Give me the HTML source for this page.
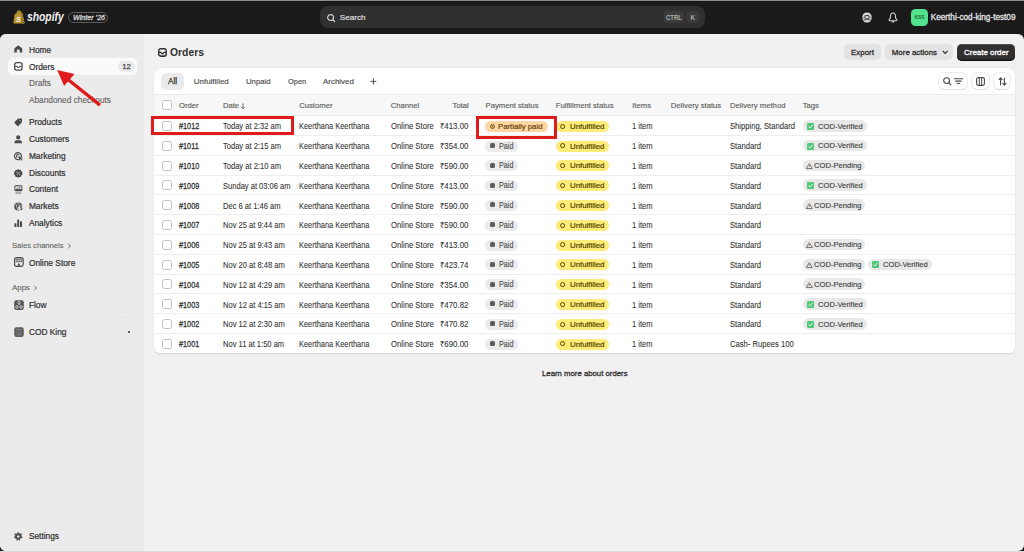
<!DOCTYPE html>
<html><head><meta charset="utf-8"><title>Orders</title>
<style>
html,body{margin:0;padding:0;}
body{width:1024px;height:552px;overflow:hidden;position:relative;background:#1a1a1a;font-family:"Liberation Sans",sans-serif;}
.t{position:absolute;white-space:nowrap;line-height:1;}
.r{position:absolute;}
svg.r{overflow:visible;}
</style></head><body>
<div class="r" style="left:0.00px;top:0.00px;width:1024.00px;height:1.00px;background:#8e8e8e"></div>
<div class="r" style="left:0.00px;top:1.00px;width:1024.00px;height:1.00px;background:#141414"></div>
<svg class="r" style="left:12.50px;top:10.00px" width="12" height="14" viewBox="0 0 12 14"><path d="M3.2 4.6 C3.2 1.6 4.6 0.3 6 0.3 C7.5 0.3 8.6 1.6 8.7 3.8 Z" fill="#a8882a"/><path d="M1.7 4.5 Q1.8 3.9 2.5 3.8 L9.3 3.1 L11.5 12.7 Q11.6 13.6 10.7 13.6 L1.1 13.6 Q0.3 13.6 0.4 12.8 Z" fill="#b9952d"/><path d="M9.3 3.1 L11.5 12.7 Q11.6 13.6 10.7 13.6 L8.5 13.6 L8.2 3.2 Z" fill="#96782a"/><text x="3.0" y="11.5" font-family="Liberation Sans" font-weight="bold" font-style="italic" font-size="7.4" fill="#f2f2f2">S</text></svg>
<div class="t" style="left:27.00px;transform-origin:left;top:10.99px;font-size:12.3px;font-weight:700;color:#f1f1f1;transform:scaleX(0.84);font-style:italic;">shopify</div>
<div class="r" style="left:67.80px;top:11.70px;width:39.80px;height:11.80px;border:0.9px solid #5e5e5e;border-radius:6px;box-sizing:border-box"></div>
<div class="t" style="left:72.60px;transform-origin:left;top:14.47px;font-size:7.0px;font-weight:400;color:#d4d4d4;transform:scaleX(1.02);-webkit-text-stroke:0.3px #d4d4d4;font-style:italic;">Winter ’26</div>
<div class="r" style="left:319.80px;top:6.00px;width:385.00px;height:22.00px;background:#303030;border-radius:8px"></div>
<svg class="r" style="left:327.30px;top:14.00px" width="9" height="8" viewBox="0 0 9 8"><circle cx="3.6" cy="3.5" r="2.95" fill="none" stroke="#d4d4d4" stroke-width="1.15"/><path d="M5.8 5.7 L7.6 7.5" stroke="#d4d4d4" stroke-width="1.2" stroke-linecap="round"/></svg>
<div class="t" style="left:339.80px;transform-origin:left;top:13.94px;font-size:8.1px;font-weight:400;color:#e3e3e3;transform:scaleX(1.0);-webkit-text-stroke:0.15px #e3e3e3;">Search</div>
<div class="r" style="left:663.80px;top:10.90px;width:20.70px;height:12.50px;background:#3b3b3b;border-radius:3.5px"></div>
<div class="t" style="left:574.10px;width:200px;text-align:center;transform-origin:center;top:14.57px;font-size:6.3px;font-weight:700;color:#b0b0b0;transform:scaleX(0.95);">CTRL</div>
<div class="r" style="left:686.90px;top:10.90px;width:12.10px;height:12.50px;background:#3b3b3b;border-radius:3.5px"></div>
<div class="t" style="left:592.90px;width:200px;text-align:center;transform-origin:center;top:14.57px;font-size:6.3px;font-weight:700;color:#b0b0b0;transform:scaleX(1.0);">K</div>
<svg class="r" style="left:861.50px;top:12.00px" width="10" height="11" viewBox="0 0 10 11"><rect x="0.4" y="0.4" width="9.2" height="10" rx="4.2" fill="#d8d8d8"/><path d="M2.2 4.3 Q5 2.6 7.8 4.3" stroke="#1a1a1a" stroke-width="0.95" fill="none"/><path d="M1 5.7 L3.4 5.7 M6.6 5.7 L9 5.7 M1.4 7.9 L3.4 7.9 M6.6 7.9 L8.6 7.9" stroke="#1a1a1a" stroke-width="0.55"/><path d="M2.6 5.9 L7.4 8.1 M7.4 5.9 L2.6 8.1" stroke="#1a1a1a" stroke-width="0.7"/></svg>
<svg class="r" style="left:888.10px;top:11.80px" width="10" height="11" viewBox="0 0 10 11"><path d="M5 1 C3.1 1 2.5 2.8 2.5 4.4 L2.4 6 C2.4 6.7 1 7.2 1 8.1 C1 8.5 1.3 8.7 1.8 8.7 L8.2 8.7 C8.7 8.7 9 8.5 9 8.1 C9 7.2 7.6 6.7 7.6 6 L7.5 4.4 C7.5 2.8 6.9 1 5 1 Z" fill="none" stroke="#d6d6d6" stroke-width="1.05" stroke-linejoin="round"/><path d="M3.9 9.3 Q5 10.6 6.1 9.3" stroke="#d6d6d6" stroke-width="1.05" fill="none"/></svg>
<div class="r" style="left:911.10px;top:8.90px;width:16.90px;height:17.00px;background:#52e28b;border-radius:4.5px"></div>
<div class="t" style="left:819.55px;width:200px;text-align:center;transform-origin:center;top:15.54px;font-size:4.8px;font-weight:700;color:#1b6b3a;transform:scaleX(1.0);">KSS</div>
<div class="t" style="left:930.80px;transform-origin:left;top:13.56px;font-size:8.2px;font-weight:400;color:#e3e3e3;transform:scaleX(1.0);-webkit-text-stroke:0.3px #e3e3e3;">Keerthi-cod-king-test09</div>
<div class="r" style="left:0;top:34px;width:1024px;height:517px;border-radius:6px;overflow:hidden;background:#f1f1f1"><div style="position:absolute;left:0;top:0;width:144px;height:517px;background:#ebebeb"></div></div>
<div class="r" style="left:0.00px;top:551.00px;width:1024.00px;height:1.00px;background:#d9dbd8"></div>
<div class="r" style="left:8.00px;top:58.10px;width:128.80px;height:16.70px;background:#fafafa;border-radius:5px"></div>
<div class="r" style="left:118.00px;top:60.90px;width:17.00px;height:11.40px;background:#ebebeb;border-radius:5px"></div>
<div class="t" style="left:26.40px;width:200px;text-align:center;transform-origin:center;top:63.07px;font-size:7.6px;font-weight:400;color:#4a4a4a;transform:scaleX(1.0);-webkit-text-stroke:0.25px #4a4a4a;">12</div>
<svg class="r" style="left:14.00px;top:45.20px" width="9" height="8.5" viewBox="0 0 9 8.5"><path d="M4.25 0.4 Q3.9 0.4 3.6 0.7 L0.8 3.1 Q0.3 3.5 0.3 4.2 L0.3 6.9 Q0.3 7.6 1 7.6 L2.8 7.6 L2.8 5.4 Q2.8 4.6 3.6 4.6 L4.9 4.6 Q5.7 4.6 5.7 5.4 L5.7 7.6 L7.5 7.6 Q8.2 7.6 8.2 6.9 L8.2 4.2 Q8.2 3.5 7.7 3.1 L4.9 0.7 Q4.6 0.4 4.25 0.4 Z" fill="#4a4a4a"/></svg>
<div class="t" style="left:28.90px;transform-origin:left;top:46.03px;font-size:8.35px;font-weight:400;color:#303030;transform:scaleX(1.0);-webkit-text-stroke:0.2px #303030;">Home</div>
<svg class="r" style="left:14.00px;top:62.20px" width="9" height="9" viewBox="0 0 9 9"><rect x="0.65" y="0.65" width="7.4" height="7.4" rx="2" fill="none" stroke="#4a4a4a" stroke-width="1.3"/><path d="M0.9 4.3 L2.7 4.3 Q3.1 4.3 3.3 4.7 L3.5 5.1 Q3.7 5.5 4.1 5.5 L4.6 5.5 Q5 5.5 5.2 5.1 L5.4 4.7 Q5.6 4.3 6 4.3 L7.8 4.3" fill="none" stroke="#4a4a4a" stroke-width="1.1"/></svg>
<div class="t" style="left:28.90px;transform-origin:left;top:62.83px;font-size:8.35px;font-weight:400;color:#303030;transform:scaleX(1.0);-webkit-text-stroke:0.2px #303030;">Orders</div>
<div class="t" style="left:28.90px;transform-origin:left;top:79.37px;font-size:8.3px;font-weight:400;color:#616161;transform:scaleX(1.0);-webkit-text-stroke:0.1px #616161;">Drafts</div>
<div class="t" style="left:28.90px;transform-origin:left;top:96.47px;font-size:8.3px;font-weight:400;color:#616161;transform:scaleX(1.0);-webkit-text-stroke:0.1px #616161;">Abandoned checkouts</div>
<svg class="r" style="left:14.00px;top:118.00px" width="9" height="9" viewBox="0 0 9 9"><path d="M4.6 0.5 L7.2 0.5 Q8 0.5 8 1.3 L8 3.9 Q8 4.3 7.7 4.6 L4.4 7.9 Q3.9 8.4 3.4 7.9 L0.6 5.1 Q0.1 4.6 0.6 4.1 L3.9 0.8 Q4.2 0.5 4.6 0.5 Z" fill="#4a4a4a"/><circle cx="6" cy="2.5" r="0.8" fill="#9a9a9a"/></svg>
<div class="t" style="left:28.90px;transform-origin:left;top:118.03px;font-size:8.35px;font-weight:400;color:#303030;transform:scaleX(1.0);-webkit-text-stroke:0.2px #303030;">Products</div>
<svg class="r" style="left:14.00px;top:135.00px" width="9" height="9" viewBox="0 0 9 9"><circle cx="4.2" cy="2.4" r="2.1" fill="#4a4a4a"/><path d="M0.4 8.3 L0.4 7.4 Q0.4 5.3 2.6 5.3 L5.8 5.3 Q8 5.3 8 7.4 L8 8.3 Z" fill="#4a4a4a"/></svg>
<div class="t" style="left:28.90px;transform-origin:left;top:135.03px;font-size:8.35px;font-weight:400;color:#303030;transform:scaleX(1.0);-webkit-text-stroke:0.2px #303030;">Customers</div>
<svg class="r" style="left:14.00px;top:151.70px" width="9" height="9" viewBox="0 0 9 9"><path d="M7.4 4.8 A3.5 3.5 0 1 0 4.8 7.5" fill="none" stroke="#4a4a4a" stroke-width="1.15"/><path d="M5.5 3.4 A1.6 1.6 0 1 0 3.5 5.5" fill="none" stroke="#4a4a4a" stroke-width="1.05"/><path d="M4.4 4.4 L8.6 5.6 L7 6.4 L8.6 8 L8 8.6 L6.4 7 L5.6 8.6 Z" fill="#4a4a4a" stroke="#4a4a4a" stroke-width="0.3" stroke-linejoin="round"/></svg>
<div class="t" style="left:28.90px;transform-origin:left;top:151.73px;font-size:8.35px;font-weight:400;color:#303030;transform:scaleX(1.0);-webkit-text-stroke:0.2px #303030;">Marketing</div>
<svg class="r" style="left:14.00px;top:168.50px" width="9" height="9" viewBox="0 0 9 9"><path d="M4.2 0 L5.3 0.9 L6.8 0.8 L7.2 2.2 L8.5 3 L8 4.4 L8.5 5.8 L7.2 6.6 L6.8 8 L5.3 7.9 L4.2 8.8 L3.1 7.9 L1.6 8 L1.2 6.6 L-0.1 5.8 L0.4 4.4 L-0.1 3 L1.2 2.2 L1.6 0.8 L3.1 0.9 Z" fill="#4a4a4a"/><path d="M2.8 6 L5.6 2.8" stroke="#ebebeb" stroke-width="0.7"/><circle cx="3" cy="3.1" r="0.55" fill="#ebebeb"/><circle cx="5.4" cy="5.7" r="0.55" fill="#ebebeb"/></svg>
<div class="t" style="left:28.90px;transform-origin:left;top:168.53px;font-size:8.35px;font-weight:400;color:#303030;transform:scaleX(1.0);-webkit-text-stroke:0.2px #303030;">Discounts</div>
<svg class="r" style="left:14.00px;top:185.10px" width="9" height="9" viewBox="0 0 9 9"><rect x="0.4" y="0.3" width="8" height="6" rx="1.4" fill="#4a4a4a"/><path d="M1.3 5.3 L3.3 3.2 L5 4.4 L6.2 3.6 L7.5 4.8 L7.5 1.8 Q7.5 1.2 6.9 1.2 L1.9 1.2 Q1.3 1.2 1.3 1.8 Z" fill="#d8d8d8"/><circle cx="5.6" cy="2.3" r="0.6" fill="#4a4a4a"/><path d="M1.6 8 L7.2 8" stroke="#4a4a4a" stroke-width="0.8"/></svg>
<div class="t" style="left:28.90px;transform-origin:left;top:185.13px;font-size:8.35px;font-weight:400;color:#303030;transform:scaleX(1.0);-webkit-text-stroke:0.2px #303030;">Content</div>
<svg class="r" style="left:14.00px;top:202.00px" width="9" height="9" viewBox="0 0 9 9"><circle cx="4.2" cy="4.4" r="4" fill="#4a4a4a"/><path d="M1.2 2.2 L2.8 3 L2.4 4.6 L3.6 6.2 L3.4 8 M3.4 0.6 L4.4 2.2 L5.6 2.4" fill="none" stroke="#ebebeb" stroke-width="0.75"/><circle cx="7" cy="5.8" r="2.9" fill="#ebebeb"/><path d="M8.2 4.4 Q7.9 3.9 7.1 3.9 Q6.1 3.9 6.1 4.7 Q6.1 5.4 7.1 5.6 Q8.2 5.8 8.2 6.7 Q8.2 7.6 7.1 7.6 Q6.3 7.6 5.9 7" fill="none" stroke="#4a4a4a" stroke-width="0.9"/><path d="M7.1 3.2 L7.1 8.3" stroke="#4a4a4a" stroke-width="0.6"/></svg>
<div class="t" style="left:28.90px;transform-origin:left;top:202.03px;font-size:8.35px;font-weight:400;color:#303030;transform:scaleX(1.0);-webkit-text-stroke:0.2px #303030;">Markets</div>
<svg class="r" style="left:14.00px;top:218.90px" width="9" height="9" viewBox="0 0 9 9"><rect x="0.4" y="4.2" width="2" height="3.8" rx="0.6" fill="#4a4a4a"/><rect x="3.2" y="0.4" width="2" height="7.6" rx="0.6" fill="#4a4a4a"/><rect x="6" y="2.2" width="2" height="5.8" rx="0.6" fill="#4a4a4a"/></svg>
<div class="t" style="left:28.90px;transform-origin:left;top:218.93px;font-size:8.35px;font-weight:400;color:#303030;transform:scaleX(1.0);-webkit-text-stroke:0.2px #303030;">Analytics</div>
<div class="t" style="left:12.00px;transform-origin:left;top:242.07px;font-size:7.6px;font-weight:400;color:#616161;transform:scaleX(1.0);-webkit-text-stroke:0.1px #616161;">Sales channels</div>
<svg class="r" style="left:67.40px;top:242.80px" width="5" height="6" viewBox="0 0 5 6"><path d="M1.2 0.8 L3.5 3 L1.2 5.2" fill="none" stroke="#616161" stroke-width="0.9"/></svg>
<svg class="r" style="left:13.50px;top:257.40px" width="10" height="10" viewBox="0 0 10 10"><rect x="0.6" y="0.6" width="8.6" height="8.8" rx="1.8" fill="none" stroke="#4a4a4a" stroke-width="1.2"/><path d="M2.2 2.2 L7.6 2.2 L7.6 4.8 L2.2 4.8 Z" fill="none" stroke="#4a4a4a" stroke-width="0.8"/><path d="M3.9 2.2 L3.9 4.8 M5.9 2.2 L5.9 4.8" stroke="#4a4a4a" stroke-width="0.6"/><path d="M3.2 8.4 L4.9 5.9 L6.6 8.4 Z" fill="#4a4a4a"/></svg>
<div class="t" style="left:28.90px;transform-origin:left;top:258.73px;font-size:8.35px;font-weight:400;color:#303030;transform:scaleX(1.0);-webkit-text-stroke:0.2px #303030;">Online Store</div>
<div class="t" style="left:12.00px;transform-origin:left;top:283.91px;font-size:7.9px;font-weight:400;color:#616161;transform:scaleX(1.0);-webkit-text-stroke:0.1px #616161;">Apps</div>
<svg class="r" style="left:33.40px;top:285.00px" width="5" height="6" viewBox="0 0 5 6"><path d="M1.2 0.8 L3.5 3 L1.2 5.2" fill="none" stroke="#616161" stroke-width="0.9"/></svg>
<svg class="r" style="left:13.50px;top:299.60px" width="10" height="10.2" viewBox="0 0 10 10.2"><rect x="0.2" y="0.2" width="9.6" height="9.8" rx="2.2" fill="#555555"/><circle cx="5" cy="2.7" r="1.25" fill="none" stroke="#e6e6e6" stroke-width="0.75"/><circle cx="2.9" cy="7.1" r="1.25" fill="none" stroke="#e6e6e6" stroke-width="0.75"/><circle cx="7.1" cy="7.1" r="1.25" fill="none" stroke="#e6e6e6" stroke-width="0.75"/><path d="M5 3.95 L5 4.9 M4.4 4.9 L3.2 5.85 M5.6 4.9 L6.8 5.85" stroke="#e6e6e6" stroke-width="0.6" fill="none"/></svg>
<div class="t" style="left:28.90px;transform-origin:left;top:301.13px;font-size:8.35px;font-weight:400;color:#303030;transform:scaleX(1.0);-webkit-text-stroke:0.2px #303030;">Flow</div>
<div class="r" style="left:12.00px;top:317.20px;width:113.50px;height:1.00px;background:#e4e4e4"></div>
<svg class="r" style="left:13.50px;top:327.00px" width="10" height="10.2" viewBox="0 0 10 10.2"><rect x="0.2" y="0.2" width="9.6" height="9.8" rx="2.2" fill="#5f5f5f"/><path d="M2 3 L4 2 L6 3.4 L8 2.4 M2.2 6 L4.4 4.6 L5.6 6.6 L7.8 5.4 M2.6 8.2 L5 7.2 L7.4 8.4" stroke="#8e8e8e" stroke-width="0.8" fill="none"/></svg>
<div class="t" style="left:28.90px;transform-origin:left;top:327.93px;font-size:8.35px;font-weight:400;color:#303030;transform:scaleX(1.0);-webkit-text-stroke:0.2px #303030;">COD King</div>
<div class="r" style="left:127.90px;top:330.90px;width:2.30px;height:2.30px;background:#303030;border-radius:50%"></div>
<svg class="r" style="left:13.90px;top:532.20px" width="9" height="9" viewBox="0 0 9 9"><path d="M4.2 0.2 L5.6 1.9 L7.8 1.8 L7 3.9 L8.3 5.7 L6.1 6.3 L5.4 8.5 L4.2 7.3 L3 8.5 L2.3 6.3 L0.1 5.7 L1.4 3.9 L0.6 1.8 L2.8 1.9 Z" fill="#4a4a4a" stroke="#4a4a4a" stroke-width="0.5" stroke-linejoin="round"/><circle cx="4.2" cy="4.5" r="1.2" fill="#ebebeb"/></svg>
<div class="t" style="left:28.90px;transform-origin:left;top:532.23px;font-size:8.35px;font-weight:400;color:#303030;transform:scaleX(1.0);-webkit-text-stroke:0.2px #303030;">Settings</div>
<svg class="r" style="left:158.00px;top:47.90px" width="9" height="9" viewBox="0 0 9 9"><rect x="0.7" y="0.7" width="7.5" height="7.5" rx="2" fill="none" stroke="#303030" stroke-width="1.4"/><path d="M0.9 4.4 L2.8 4.4 Q3.2 4.4 3.4 4.8 L3.6 5.2 Q3.8 5.6 4.2 5.6 L4.7 5.6 Q5.1 5.6 5.3 5.2 L5.5 4.8 Q5.7 4.4 6.1 4.4 L8 4.4" fill="none" stroke="#303030" stroke-width="1.2"/><path d="M1 7.2 L8 7.2" stroke="#303030" stroke-width="0.8" opacity="0.6"/></svg>
<div class="t" style="left:169.80px;transform-origin:left;top:46.76px;font-size:10.8px;font-weight:700;color:#303030;transform:scaleX(0.96);">Orders</div>
<div class="r" style="left:844.20px;top:43.90px;width:36.60px;height:16.60px;background:#e3e3e3;border-radius:5px"></div>
<div class="t" style="left:762.50px;width:200px;text-align:center;transform-origin:center;top:48.71px;font-size:7.9px;font-weight:400;color:#303030;transform:scaleX(1.0);-webkit-text-stroke:0.3px #303030;">Export</div>
<div class="r" style="left:884.80px;top:43.90px;width:68.30px;height:16.60px;background:#e3e3e3;border-radius:5px"></div>
<div class="t" style="left:891.80px;transform-origin:left;top:48.71px;font-size:7.9px;font-weight:400;color:#303030;transform:scaleX(1.0);-webkit-text-stroke:0.3px #303030;">More actions</div>
<svg class="r" style="left:941.60px;top:49.60px" width="7" height="5" viewBox="0 0 7 5"><path d="M0.8 1 L3.2 3.5 L5.6 1" fill="none" stroke="#303030" stroke-width="1.1"/></svg>
<div class="r" style="left:956.80px;top:43.50px;width:58.70px;height:17.50px;background:#303030;border-radius:5px;box-shadow:inset 0 -1.2px 0 #0f0f0f, inset 0 0.8px 0 #5a5a5a"></div>
<div class="t" style="left:886.30px;width:200px;text-align:center;transform-origin:center;top:48.67px;font-size:7.95px;font-weight:400;color:#ffffff;transform:scaleX(1.0);-webkit-text-stroke:0.3px #ffffff;">Create order</div>
<div class="r" style="left:154.00px;top:67.60px;width:861.00px;height:285.60px;background:#fff;border-radius:8px 8px 6px 6px;box-shadow:0 0 0 0.6px #e6e6e6, 0 1px 0 #d2d2d2, 0 2px 1px #e8e8e8"></div>
<div class="r" style="left:161.00px;top:73.30px;width:23.30px;height:16.50px;background:#ebebeb;border-radius:5px"></div>
<div class="t" style="left:72.60px;width:200px;text-align:center;transform-origin:center;top:78.26px;font-size:8.2px;font-weight:400;color:#303030;transform:scaleX(1.0);-webkit-text-stroke:0.25px #303030;">All</div>
<div class="t" style="left:193.70px;transform-origin:left;top:78.43px;font-size:8.0px;font-weight:400;color:#4d4d4d;transform:scaleX(1.0);-webkit-text-stroke:0.15px #4d4d4d;">Unfulfilled</div>
<div class="t" style="left:246.40px;transform-origin:left;top:78.43px;font-size:8.0px;font-weight:400;color:#4d4d4d;transform:scaleX(0.97);-webkit-text-stroke:0.15px #4d4d4d;">Unpaid</div>
<div class="t" style="left:288.10px;transform-origin:left;top:78.43px;font-size:8.0px;font-weight:400;color:#4d4d4d;transform:scaleX(0.93);-webkit-text-stroke:0.15px #4d4d4d;">Open</div>
<div class="t" style="left:323.30px;transform-origin:left;top:78.43px;font-size:8.0px;font-weight:400;color:#4d4d4d;transform:scaleX(0.99);-webkit-text-stroke:0.15px #4d4d4d;">Archived</div>
<svg class="r" style="left:369.80px;top:77.80px" width="7" height="7" viewBox="0 0 7 7"><path d="M3.4 0.4 L3.4 6.4 M0.4 3.4 L6.4 3.4" stroke="#4a4a4a" stroke-width="1"/></svg>
<div class="r" style="left:938.70px;top:72.90px;width:28.50px;height:16.50px;background:#fff;border-radius:5px;box-shadow:0 0 0 0.7px #e3e3e3, 0 1px 0.5px #cfcfcf"></div>
<svg class="r" style="left:942.80px;top:77.30px" width="9" height="9" viewBox="0 0 9 9"><circle cx="3.6" cy="3.6" r="2.9" fill="none" stroke="#4a4a4a" stroke-width="1.1"/><path d="M5.7 5.7 L7.9 7.9" stroke="#4a4a4a" stroke-width="1.2" stroke-linecap="round"/></svg>
<svg class="r" style="left:954.20px;top:77.80px" width="9" height="7" viewBox="0 0 9 7"><path d="M0.2 0.7 L8.6 0.7 M1.6 3.1 L7.2 3.1 M3 5.5 L5.8 5.5" stroke="#4a4a4a" stroke-width="1.1" stroke-linecap="round"/></svg>
<div class="r" style="left:972.40px;top:72.90px;width:16.40px;height:16.50px;background:#fff;border-radius:5px;box-shadow:0 0 0 0.7px #e3e3e3, 0 1px 0.5px #cfcfcf"></div>
<svg class="r" style="left:976.30px;top:77.00px" width="9" height="9" viewBox="0 0 9 9"><rect x="0.6" y="0.6" width="7.8" height="7.8" rx="1.6" fill="none" stroke="#4a4a4a" stroke-width="1.1"/><path d="M3.3 0.6 L3.3 8.4 M5.7 0.6 L5.7 8.4" stroke="#4a4a4a" stroke-width="1"/></svg>
<div class="r" style="left:994.30px;top:72.90px;width:16.00px;height:16.50px;background:#fff;border-radius:5px;box-shadow:0 0 0 0.7px #e3e3e3, 0 1px 0.5px #cfcfcf"></div>
<svg class="r" style="left:997.90px;top:77.00px" width="9" height="9" viewBox="0 0 9 9"><path d="M2.6 8.2 L2.6 0.9 M0.7 2.8 L2.6 0.9 L4.5 2.8 M6.4 0.8 L6.4 8.1 M4.5 6.2 L6.4 8.1 L8.3 6.2" fill="none" stroke="#4a4a4a" stroke-width="1.15" stroke-linejoin="round"/></svg>
<div class="r" style="left:154.00px;top:94.00px;width:861.00px;height:21.60px;background:#f7f7f7;border-top:1px solid #ececec;border-bottom:1px solid #ececec;box-sizing:border-box"></div>
<div class="r" style="left:161.50px;top:100.10px;width:10.00px;height:10.00px;background:#fff;border:1px solid #c2c2c2;border-radius:2.5px;box-sizing:border-box"></div>
<div class="t" style="left:179.00px;transform-origin:left;top:101.58px;font-size:7.7px;font-weight:400;color:#616161;transform:scaleX(1.0);-webkit-text-stroke:0.15px #616161;">Order</div>
<div class="t" style="left:222.90px;transform-origin:left;top:101.58px;font-size:7.7px;font-weight:400;color:#616161;transform:scaleX(1.0);-webkit-text-stroke:0.15px #616161;">Date</div>
<svg class="r" style="left:239.80px;top:102.80px" width="6" height="7" viewBox="0 0 6 7"><path d="M3 0.4 L3 5.6 M1 3.8 L3 5.8 L5 3.8" fill="none" stroke="#616161" stroke-width="0.9"/></svg>
<div class="t" style="left:299.20px;transform-origin:left;top:101.58px;font-size:7.7px;font-weight:400;color:#616161;transform:scaleX(1.0);-webkit-text-stroke:0.15px #616161;">Customer</div>
<div class="t" style="left:390.70px;transform-origin:left;top:101.58px;font-size:7.7px;font-weight:400;color:#616161;transform:scaleX(1.0);-webkit-text-stroke:0.15px #616161;">Channel</div>
<div class="t" style="right:555.20px;transform-origin:right;top:101.58px;font-size:7.7px;font-weight:400;color:#616161;transform:scaleX(1.0);-webkit-text-stroke:0.15px #616161;">Total</div>
<div class="t" style="left:485.50px;transform-origin:left;top:101.58px;font-size:7.7px;font-weight:400;color:#616161;transform:scaleX(1.0);-webkit-text-stroke:0.15px #616161;">Payment status</div>
<div class="t" style="left:555.80px;transform-origin:left;top:101.58px;font-size:7.7px;font-weight:400;color:#616161;transform:scaleX(1.0);-webkit-text-stroke:0.15px #616161;">Fulfillment status</div>
<div class="t" style="left:632.20px;transform-origin:left;top:101.58px;font-size:7.7px;font-weight:400;color:#616161;transform:scaleX(1.0);-webkit-text-stroke:0.15px #616161;">Items</div>
<div class="t" style="left:670.80px;transform-origin:left;top:101.58px;font-size:7.7px;font-weight:400;color:#616161;transform:scaleX(1.0);-webkit-text-stroke:0.15px #616161;">Delivery status</div>
<div class="t" style="left:729.90px;transform-origin:left;top:101.58px;font-size:7.7px;font-weight:400;color:#616161;transform:scaleX(1.0);-webkit-text-stroke:0.15px #616161;">Delivery method</div>
<div class="t" style="left:802.70px;transform-origin:left;top:101.58px;font-size:7.7px;font-weight:400;color:#616161;transform:scaleX(1.0);-webkit-text-stroke:0.15px #616161;">Tags</div>
<div class="r" style="left:161.50px;top:120.90px;width:10.00px;height:10.00px;background:#fff;border:1px solid #c2c2c2;border-radius:2.5px;box-sizing:border-box"></div>
<div class="t" style="left:179.00px;transform-origin:left;top:122.37px;font-size:8.3px;font-weight:400;color:#333333;transform:scaleX(0.88);-webkit-text-stroke:0.26px #333333;">#1012</div>
<div class="t" style="left:223.10px;transform-origin:left;top:122.37px;font-size:8.3px;font-weight:400;color:#333333;transform:scaleX(0.91);-webkit-text-stroke:0.08px #333333;">Today at 2:32 am</div>
<div class="t" style="left:299.20px;transform-origin:left;top:122.37px;font-size:8.3px;font-weight:400;color:#333333;transform:scaleX(0.893);-webkit-text-stroke:0.08px #333333;">Keerthana Keerthana</div>
<div class="t" style="left:390.70px;transform-origin:left;top:122.37px;font-size:8.3px;font-weight:400;color:#333333;transform:scaleX(0.927);-webkit-text-stroke:0.08px #333333;">Online Store</div>
<div class="t" style="right:555.20px;transform-origin:right;top:122.37px;font-size:8.3px;font-weight:400;color:#333333;transform:scaleX(0.947);-webkit-text-stroke:0.08px #333333;">₹413.00</div>
<div class="r" style="left:485.30px;top:120.70px;width:62.90px;height:11.00px;background:#ffd6a4;border-radius:6px"></div>
<svg class="r" style="left:490.10px;top:123.80px" width="5" height="5" viewBox="0 0 5 5"><circle cx="2.5" cy="2.5" r="1.95" fill="none" stroke="#6b5312" stroke-width="1"/><circle cx="2.5" cy="2.5" r="1" fill="#6b5312" opacity="0.8"/></svg>
<div class="t" style="left:498.40px;transform-origin:left;top:122.84px;font-size:8.1px;font-weight:400;color:#5e4200;transform:scaleX(0.96);-webkit-text-stroke:0.2px #5e4200;">Partially paid</div>
<div class="r" style="left:556.30px;top:120.70px;width:53.20px;height:11.00px;background:#ffeb78;border-radius:6px"></div>
<svg class="r" style="left:560.20px;top:123.60px" width="6" height="6" viewBox="0 0 6 6"><circle cx="2.6" cy="2.6" r="2.05" fill="none" stroke="#4f4700" stroke-width="1.0"/></svg>
<div class="t" style="left:569.50px;transform-origin:left;top:122.84px;font-size:8.1px;font-weight:400;color:#4f4700;transform:scaleX(0.97);-webkit-text-stroke:0.2px #4f4700;">Unfulfilled</div>
<div class="t" style="left:632.20px;transform-origin:left;top:122.37px;font-size:8.3px;font-weight:400;color:#333333;transform:scaleX(0.91);-webkit-text-stroke:0.08px #333333;">1 item</div>
<div class="t" style="left:729.90px;transform-origin:left;top:122.37px;font-size:8.3px;font-weight:400;color:#333333;transform:scaleX(0.92);-webkit-text-stroke:0.08px #333333;">Shipping, Standard</div>
<div class="r" style="left:802.50px;top:119.90px;width:64.00px;height:11.80px;background:#e8e8e8;border-radius:6px"></div>
<svg class="r" style="left:806.90px;top:122.70px" width="7" height="7" viewBox="0 0 7 7"><rect x="0" y="0" width="7" height="7" rx="1" fill="#50c878"/><path d="M1.6 3.6 L3 5 L5.6 2" fill="none" stroke="#fff" stroke-width="0.9"/></svg>
<div class="t" style="left:818.00px;transform-origin:left;top:122.54px;font-size:8.1px;font-weight:400;color:#444444;transform:scaleX(0.94);-webkit-text-stroke:0.15px #444444;">COD-Verified</div>
<div class="r" style="left:154.00px;top:134.90px;width:861.00px;height:1.00px;background:#eeeeee"></div>
<div class="r" style="left:161.50px;top:140.70px;width:10.00px;height:10.00px;background:#fff;border:1px solid #c2c2c2;border-radius:2.5px;box-sizing:border-box"></div>
<div class="t" style="left:179.00px;transform-origin:left;top:142.17px;font-size:8.3px;font-weight:400;color:#333333;transform:scaleX(0.88);-webkit-text-stroke:0.26px #333333;">#1011</div>
<div class="t" style="left:223.10px;transform-origin:left;top:142.17px;font-size:8.3px;font-weight:400;color:#333333;transform:scaleX(0.91);-webkit-text-stroke:0.08px #333333;">Today at 2:15 am</div>
<div class="t" style="left:299.20px;transform-origin:left;top:142.17px;font-size:8.3px;font-weight:400;color:#333333;transform:scaleX(0.893);-webkit-text-stroke:0.08px #333333;">Keerthana Keerthana</div>
<div class="t" style="left:390.70px;transform-origin:left;top:142.17px;font-size:8.3px;font-weight:400;color:#333333;transform:scaleX(0.927);-webkit-text-stroke:0.08px #333333;">Online Store</div>
<div class="t" style="right:555.20px;transform-origin:right;top:142.17px;font-size:8.3px;font-weight:400;color:#333333;transform:scaleX(0.947);-webkit-text-stroke:0.08px #333333;">₹354.00</div>
<div class="r" style="left:485.30px;top:140.50px;width:32.90px;height:11.00px;background:#ebebeb;border-radius:6px"></div>
<div class="r" style="left:490.10px;top:142.90px;width:4.90px;height:5.00px;background:#5c5c5c;border-radius:1.6px"></div>
<div class="t" style="left:499.20px;transform-origin:left;top:142.56px;font-size:8.2px;font-weight:400;color:#4a4a4a;transform:scaleX(0.88);-webkit-text-stroke:0.1px #4a4a4a;">Paid</div>
<div class="r" style="left:556.30px;top:140.50px;width:53.20px;height:11.00px;background:#ffeb78;border-radius:6px"></div>
<svg class="r" style="left:560.20px;top:143.40px" width="6" height="6" viewBox="0 0 6 6"><circle cx="2.6" cy="2.6" r="2.05" fill="none" stroke="#4f4700" stroke-width="1.0"/></svg>
<div class="t" style="left:569.50px;transform-origin:left;top:142.64px;font-size:8.1px;font-weight:400;color:#4f4700;transform:scaleX(0.97);-webkit-text-stroke:0.2px #4f4700;">Unfulfilled</div>
<div class="t" style="left:632.20px;transform-origin:left;top:142.17px;font-size:8.3px;font-weight:400;color:#333333;transform:scaleX(0.91);-webkit-text-stroke:0.08px #333333;">1 item</div>
<div class="t" style="left:729.90px;transform-origin:left;top:142.17px;font-size:8.3px;font-weight:400;color:#333333;transform:scaleX(0.92);-webkit-text-stroke:0.08px #333333;">Standard</div>
<div class="r" style="left:802.50px;top:139.70px;width:64.00px;height:11.80px;background:#e8e8e8;border-radius:6px"></div>
<svg class="r" style="left:806.90px;top:142.50px" width="7" height="7" viewBox="0 0 7 7"><rect x="0" y="0" width="7" height="7" rx="1" fill="#50c878"/><path d="M1.6 3.6 L3 5 L5.6 2" fill="none" stroke="#fff" stroke-width="0.9"/></svg>
<div class="t" style="left:818.00px;transform-origin:left;top:142.34px;font-size:8.1px;font-weight:400;color:#444444;transform:scaleX(0.94);-webkit-text-stroke:0.15px #444444;">COD-Verified</div>
<div class="r" style="left:154.00px;top:154.70px;width:861.00px;height:1.00px;background:#eeeeee"></div>
<div class="r" style="left:161.50px;top:160.50px;width:10.00px;height:10.00px;background:#fff;border:1px solid #c2c2c2;border-radius:2.5px;box-sizing:border-box"></div>
<div class="t" style="left:179.00px;transform-origin:left;top:161.97px;font-size:8.3px;font-weight:400;color:#333333;transform:scaleX(0.88);-webkit-text-stroke:0.26px #333333;">#1010</div>
<div class="t" style="left:223.10px;transform-origin:left;top:161.97px;font-size:8.3px;font-weight:400;color:#333333;transform:scaleX(0.91);-webkit-text-stroke:0.08px #333333;">Today at 2:10 am</div>
<div class="t" style="left:299.20px;transform-origin:left;top:161.97px;font-size:8.3px;font-weight:400;color:#333333;transform:scaleX(0.893);-webkit-text-stroke:0.08px #333333;">Keerthana Keerthana</div>
<div class="t" style="left:390.70px;transform-origin:left;top:161.97px;font-size:8.3px;font-weight:400;color:#333333;transform:scaleX(0.927);-webkit-text-stroke:0.08px #333333;">Online Store</div>
<div class="t" style="right:555.20px;transform-origin:right;top:161.97px;font-size:8.3px;font-weight:400;color:#333333;transform:scaleX(0.947);-webkit-text-stroke:0.08px #333333;">₹590.00</div>
<div class="r" style="left:485.30px;top:160.30px;width:32.90px;height:11.00px;background:#ebebeb;border-radius:6px"></div>
<div class="r" style="left:490.10px;top:162.70px;width:4.90px;height:5.00px;background:#5c5c5c;border-radius:1.6px"></div>
<div class="t" style="left:499.20px;transform-origin:left;top:162.36px;font-size:8.2px;font-weight:400;color:#4a4a4a;transform:scaleX(0.88);-webkit-text-stroke:0.1px #4a4a4a;">Paid</div>
<div class="r" style="left:556.30px;top:160.30px;width:53.20px;height:11.00px;background:#ffeb78;border-radius:6px"></div>
<svg class="r" style="left:560.20px;top:163.20px" width="6" height="6" viewBox="0 0 6 6"><circle cx="2.6" cy="2.6" r="2.05" fill="none" stroke="#4f4700" stroke-width="1.0"/></svg>
<div class="t" style="left:569.50px;transform-origin:left;top:162.44px;font-size:8.1px;font-weight:400;color:#4f4700;transform:scaleX(0.97);-webkit-text-stroke:0.2px #4f4700;">Unfulfilled</div>
<div class="t" style="left:632.20px;transform-origin:left;top:161.97px;font-size:8.3px;font-weight:400;color:#333333;transform:scaleX(0.91);-webkit-text-stroke:0.08px #333333;">1 item</div>
<div class="t" style="left:729.90px;transform-origin:left;top:161.97px;font-size:8.3px;font-weight:400;color:#333333;transform:scaleX(0.92);-webkit-text-stroke:0.08px #333333;">Standard</div>
<div class="r" style="left:802.50px;top:159.50px;width:62.20px;height:11.80px;background:#e8e8e8;border-radius:6px"></div>
<svg class="r" style="left:805.80px;top:162.90px" width="7" height="6" viewBox="0 0 7 6"><path d="M3.3 0.6 L6.3 5.5 L0.3 5.5 Z" fill="none" stroke="#5a5a5a" stroke-width="0.8" stroke-linejoin="round"/><path d="M3.3 2.2 L3.3 3.8" stroke="#5a5a5a" stroke-width="0.7"/></svg>
<div class="t" style="left:814.10px;transform-origin:left;top:162.14px;font-size:8.1px;font-weight:400;color:#444444;transform:scaleX(0.94);-webkit-text-stroke:0.15px #444444;">COD-Pending</div>
<div class="r" style="left:154.00px;top:174.50px;width:861.00px;height:1.00px;background:#eeeeee"></div>
<div class="r" style="left:161.50px;top:180.30px;width:10.00px;height:10.00px;background:#fff;border:1px solid #c2c2c2;border-radius:2.5px;box-sizing:border-box"></div>
<div class="t" style="left:179.00px;transform-origin:left;top:181.77px;font-size:8.3px;font-weight:400;color:#333333;transform:scaleX(0.88);-webkit-text-stroke:0.26px #333333;">#1009</div>
<div class="t" style="left:223.10px;transform-origin:left;top:181.77px;font-size:8.3px;font-weight:400;color:#333333;transform:scaleX(0.91);-webkit-text-stroke:0.08px #333333;">Sunday at 03:06 am</div>
<div class="t" style="left:299.20px;transform-origin:left;top:181.77px;font-size:8.3px;font-weight:400;color:#333333;transform:scaleX(0.893);-webkit-text-stroke:0.08px #333333;">Keerthana Keerthana</div>
<div class="t" style="left:390.70px;transform-origin:left;top:181.77px;font-size:8.3px;font-weight:400;color:#333333;transform:scaleX(0.927);-webkit-text-stroke:0.08px #333333;">Online Store</div>
<div class="t" style="right:555.20px;transform-origin:right;top:181.77px;font-size:8.3px;font-weight:400;color:#333333;transform:scaleX(0.947);-webkit-text-stroke:0.08px #333333;">₹413.00</div>
<div class="r" style="left:485.30px;top:180.10px;width:32.90px;height:11.00px;background:#ebebeb;border-radius:6px"></div>
<div class="r" style="left:490.10px;top:182.50px;width:4.90px;height:5.00px;background:#5c5c5c;border-radius:1.6px"></div>
<div class="t" style="left:499.20px;transform-origin:left;top:182.16px;font-size:8.2px;font-weight:400;color:#4a4a4a;transform:scaleX(0.88);-webkit-text-stroke:0.1px #4a4a4a;">Paid</div>
<div class="r" style="left:556.30px;top:180.10px;width:53.20px;height:11.00px;background:#ffeb78;border-radius:6px"></div>
<svg class="r" style="left:560.20px;top:183.00px" width="6" height="6" viewBox="0 0 6 6"><circle cx="2.6" cy="2.6" r="2.05" fill="none" stroke="#4f4700" stroke-width="1.0"/></svg>
<div class="t" style="left:569.50px;transform-origin:left;top:182.24px;font-size:8.1px;font-weight:400;color:#4f4700;transform:scaleX(0.97);-webkit-text-stroke:0.2px #4f4700;">Unfulfilled</div>
<div class="t" style="left:632.20px;transform-origin:left;top:181.77px;font-size:8.3px;font-weight:400;color:#333333;transform:scaleX(0.91);-webkit-text-stroke:0.08px #333333;">1 item</div>
<div class="t" style="left:729.90px;transform-origin:left;top:181.77px;font-size:8.3px;font-weight:400;color:#333333;transform:scaleX(0.92);-webkit-text-stroke:0.08px #333333;">Standard</div>
<div class="r" style="left:802.50px;top:179.30px;width:64.00px;height:11.80px;background:#e8e8e8;border-radius:6px"></div>
<svg class="r" style="left:806.90px;top:182.10px" width="7" height="7" viewBox="0 0 7 7"><rect x="0" y="0" width="7" height="7" rx="1" fill="#50c878"/><path d="M1.6 3.6 L3 5 L5.6 2" fill="none" stroke="#fff" stroke-width="0.9"/></svg>
<div class="t" style="left:818.00px;transform-origin:left;top:181.94px;font-size:8.1px;font-weight:400;color:#444444;transform:scaleX(0.94);-webkit-text-stroke:0.15px #444444;">COD-Verified</div>
<div class="r" style="left:154.00px;top:194.30px;width:861.00px;height:1.00px;background:#eeeeee"></div>
<div class="r" style="left:161.50px;top:200.10px;width:10.00px;height:10.00px;background:#fff;border:1px solid #c2c2c2;border-radius:2.5px;box-sizing:border-box"></div>
<div class="t" style="left:179.00px;transform-origin:left;top:201.57px;font-size:8.3px;font-weight:400;color:#333333;transform:scaleX(0.88);-webkit-text-stroke:0.26px #333333;">#1008</div>
<div class="t" style="left:223.10px;transform-origin:left;top:201.57px;font-size:8.3px;font-weight:400;color:#333333;transform:scaleX(0.91);-webkit-text-stroke:0.08px #333333;">Dec 6 at 1:46 am</div>
<div class="t" style="left:299.20px;transform-origin:left;top:201.57px;font-size:8.3px;font-weight:400;color:#333333;transform:scaleX(0.893);-webkit-text-stroke:0.08px #333333;">Keerthana Keerthana</div>
<div class="t" style="left:390.70px;transform-origin:left;top:201.57px;font-size:8.3px;font-weight:400;color:#333333;transform:scaleX(0.927);-webkit-text-stroke:0.08px #333333;">Online Store</div>
<div class="t" style="right:555.20px;transform-origin:right;top:201.57px;font-size:8.3px;font-weight:400;color:#333333;transform:scaleX(0.947);-webkit-text-stroke:0.08px #333333;">₹590.00</div>
<div class="r" style="left:485.30px;top:199.90px;width:32.90px;height:11.00px;background:#ebebeb;border-radius:6px"></div>
<div class="r" style="left:490.10px;top:202.30px;width:4.90px;height:5.00px;background:#5c5c5c;border-radius:1.6px"></div>
<div class="t" style="left:499.20px;transform-origin:left;top:201.96px;font-size:8.2px;font-weight:400;color:#4a4a4a;transform:scaleX(0.88);-webkit-text-stroke:0.1px #4a4a4a;">Paid</div>
<div class="r" style="left:556.30px;top:199.90px;width:53.20px;height:11.00px;background:#ffeb78;border-radius:6px"></div>
<svg class="r" style="left:560.20px;top:202.80px" width="6" height="6" viewBox="0 0 6 6"><circle cx="2.6" cy="2.6" r="2.05" fill="none" stroke="#4f4700" stroke-width="1.0"/></svg>
<div class="t" style="left:569.50px;transform-origin:left;top:202.04px;font-size:8.1px;font-weight:400;color:#4f4700;transform:scaleX(0.97);-webkit-text-stroke:0.2px #4f4700;">Unfulfilled</div>
<div class="t" style="left:632.20px;transform-origin:left;top:201.57px;font-size:8.3px;font-weight:400;color:#333333;transform:scaleX(0.91);-webkit-text-stroke:0.08px #333333;">1 item</div>
<div class="t" style="left:729.90px;transform-origin:left;top:201.57px;font-size:8.3px;font-weight:400;color:#333333;transform:scaleX(0.92);-webkit-text-stroke:0.08px #333333;">Standard</div>
<div class="r" style="left:802.50px;top:199.10px;width:62.20px;height:11.80px;background:#e8e8e8;border-radius:6px"></div>
<svg class="r" style="left:805.80px;top:202.50px" width="7" height="6" viewBox="0 0 7 6"><path d="M3.3 0.6 L6.3 5.5 L0.3 5.5 Z" fill="none" stroke="#5a5a5a" stroke-width="0.8" stroke-linejoin="round"/><path d="M3.3 2.2 L3.3 3.8" stroke="#5a5a5a" stroke-width="0.7"/></svg>
<div class="t" style="left:814.10px;transform-origin:left;top:201.74px;font-size:8.1px;font-weight:400;color:#444444;transform:scaleX(0.94);-webkit-text-stroke:0.15px #444444;">COD-Pending</div>
<div class="r" style="left:154.00px;top:214.10px;width:861.00px;height:1.00px;background:#eeeeee"></div>
<div class="r" style="left:161.50px;top:219.90px;width:10.00px;height:10.00px;background:#fff;border:1px solid #c2c2c2;border-radius:2.5px;box-sizing:border-box"></div>
<div class="t" style="left:179.00px;transform-origin:left;top:221.37px;font-size:8.3px;font-weight:400;color:#333333;transform:scaleX(0.88);-webkit-text-stroke:0.26px #333333;">#1007</div>
<div class="t" style="left:223.10px;transform-origin:left;top:221.37px;font-size:8.3px;font-weight:400;color:#333333;transform:scaleX(0.91);-webkit-text-stroke:0.08px #333333;">Nov 25 at 9:44 am</div>
<div class="t" style="left:299.20px;transform-origin:left;top:221.37px;font-size:8.3px;font-weight:400;color:#333333;transform:scaleX(0.893);-webkit-text-stroke:0.08px #333333;">Keerthana Keerthana</div>
<div class="t" style="left:390.70px;transform-origin:left;top:221.37px;font-size:8.3px;font-weight:400;color:#333333;transform:scaleX(0.927);-webkit-text-stroke:0.08px #333333;">Online Store</div>
<div class="t" style="right:555.20px;transform-origin:right;top:221.37px;font-size:8.3px;font-weight:400;color:#333333;transform:scaleX(0.947);-webkit-text-stroke:0.08px #333333;">₹590.00</div>
<div class="r" style="left:485.30px;top:219.70px;width:32.90px;height:11.00px;background:#ebebeb;border-radius:6px"></div>
<div class="r" style="left:490.10px;top:222.10px;width:4.90px;height:5.00px;background:#5c5c5c;border-radius:1.6px"></div>
<div class="t" style="left:499.20px;transform-origin:left;top:221.76px;font-size:8.2px;font-weight:400;color:#4a4a4a;transform:scaleX(0.88);-webkit-text-stroke:0.1px #4a4a4a;">Paid</div>
<div class="r" style="left:556.30px;top:219.70px;width:53.20px;height:11.00px;background:#ffeb78;border-radius:6px"></div>
<svg class="r" style="left:560.20px;top:222.60px" width="6" height="6" viewBox="0 0 6 6"><circle cx="2.6" cy="2.6" r="2.05" fill="none" stroke="#4f4700" stroke-width="1.0"/></svg>
<div class="t" style="left:569.50px;transform-origin:left;top:221.84px;font-size:8.1px;font-weight:400;color:#4f4700;transform:scaleX(0.97);-webkit-text-stroke:0.2px #4f4700;">Unfulfilled</div>
<div class="t" style="left:632.20px;transform-origin:left;top:221.37px;font-size:8.3px;font-weight:400;color:#333333;transform:scaleX(0.91);-webkit-text-stroke:0.08px #333333;">1 item</div>
<div class="t" style="left:729.90px;transform-origin:left;top:221.37px;font-size:8.3px;font-weight:400;color:#333333;transform:scaleX(0.92);-webkit-text-stroke:0.08px #333333;">Standard</div>
<div class="r" style="left:154.00px;top:233.90px;width:861.00px;height:1.00px;background:#eeeeee"></div>
<div class="r" style="left:161.50px;top:239.70px;width:10.00px;height:10.00px;background:#fff;border:1px solid #c2c2c2;border-radius:2.5px;box-sizing:border-box"></div>
<div class="t" style="left:179.00px;transform-origin:left;top:241.17px;font-size:8.3px;font-weight:400;color:#333333;transform:scaleX(0.88);-webkit-text-stroke:0.26px #333333;">#1006</div>
<div class="t" style="left:223.10px;transform-origin:left;top:241.17px;font-size:8.3px;font-weight:400;color:#333333;transform:scaleX(0.91);-webkit-text-stroke:0.08px #333333;">Nov 25 at 9:43 am</div>
<div class="t" style="left:299.20px;transform-origin:left;top:241.17px;font-size:8.3px;font-weight:400;color:#333333;transform:scaleX(0.893);-webkit-text-stroke:0.08px #333333;">Keerthana Keerthana</div>
<div class="t" style="left:390.70px;transform-origin:left;top:241.17px;font-size:8.3px;font-weight:400;color:#333333;transform:scaleX(0.927);-webkit-text-stroke:0.08px #333333;">Online Store</div>
<div class="t" style="right:555.20px;transform-origin:right;top:241.17px;font-size:8.3px;font-weight:400;color:#333333;transform:scaleX(0.947);-webkit-text-stroke:0.08px #333333;">₹413.00</div>
<div class="r" style="left:485.30px;top:239.50px;width:32.90px;height:11.00px;background:#ebebeb;border-radius:6px"></div>
<div class="r" style="left:490.10px;top:241.90px;width:4.90px;height:5.00px;background:#5c5c5c;border-radius:1.6px"></div>
<div class="t" style="left:499.20px;transform-origin:left;top:241.56px;font-size:8.2px;font-weight:400;color:#4a4a4a;transform:scaleX(0.88);-webkit-text-stroke:0.1px #4a4a4a;">Paid</div>
<div class="r" style="left:556.30px;top:239.50px;width:53.20px;height:11.00px;background:#ffeb78;border-radius:6px"></div>
<svg class="r" style="left:560.20px;top:242.40px" width="6" height="6" viewBox="0 0 6 6"><circle cx="2.6" cy="2.6" r="2.05" fill="none" stroke="#4f4700" stroke-width="1.0"/></svg>
<div class="t" style="left:569.50px;transform-origin:left;top:241.64px;font-size:8.1px;font-weight:400;color:#4f4700;transform:scaleX(0.97);-webkit-text-stroke:0.2px #4f4700;">Unfulfilled</div>
<div class="t" style="left:632.20px;transform-origin:left;top:241.17px;font-size:8.3px;font-weight:400;color:#333333;transform:scaleX(0.91);-webkit-text-stroke:0.08px #333333;">1 item</div>
<div class="t" style="left:729.90px;transform-origin:left;top:241.17px;font-size:8.3px;font-weight:400;color:#333333;transform:scaleX(0.92);-webkit-text-stroke:0.08px #333333;">Standard</div>
<div class="r" style="left:802.50px;top:238.70px;width:62.20px;height:11.80px;background:#e8e8e8;border-radius:6px"></div>
<svg class="r" style="left:805.80px;top:242.10px" width="7" height="6" viewBox="0 0 7 6"><path d="M3.3 0.6 L6.3 5.5 L0.3 5.5 Z" fill="none" stroke="#5a5a5a" stroke-width="0.8" stroke-linejoin="round"/><path d="M3.3 2.2 L3.3 3.8" stroke="#5a5a5a" stroke-width="0.7"/></svg>
<div class="t" style="left:814.10px;transform-origin:left;top:241.34px;font-size:8.1px;font-weight:400;color:#444444;transform:scaleX(0.94);-webkit-text-stroke:0.15px #444444;">COD-Pending</div>
<div class="r" style="left:154.00px;top:253.70px;width:861.00px;height:1.00px;background:#eeeeee"></div>
<div class="r" style="left:161.50px;top:259.50px;width:10.00px;height:10.00px;background:#fff;border:1px solid #c2c2c2;border-radius:2.5px;box-sizing:border-box"></div>
<div class="t" style="left:179.00px;transform-origin:left;top:260.97px;font-size:8.3px;font-weight:400;color:#333333;transform:scaleX(0.88);-webkit-text-stroke:0.26px #333333;">#1005</div>
<div class="t" style="left:223.10px;transform-origin:left;top:260.97px;font-size:8.3px;font-weight:400;color:#333333;transform:scaleX(0.91);-webkit-text-stroke:0.08px #333333;">Nov 20 at 8:48 am</div>
<div class="t" style="left:299.20px;transform-origin:left;top:260.97px;font-size:8.3px;font-weight:400;color:#333333;transform:scaleX(0.893);-webkit-text-stroke:0.08px #333333;">Keerthana Keerthana</div>
<div class="t" style="left:390.70px;transform-origin:left;top:260.97px;font-size:8.3px;font-weight:400;color:#333333;transform:scaleX(0.927);-webkit-text-stroke:0.08px #333333;">Online Store</div>
<div class="t" style="right:555.20px;transform-origin:right;top:260.97px;font-size:8.3px;font-weight:400;color:#333333;transform:scaleX(0.947);-webkit-text-stroke:0.08px #333333;">₹423.74</div>
<div class="r" style="left:485.30px;top:259.30px;width:32.90px;height:11.00px;background:#ebebeb;border-radius:6px"></div>
<div class="r" style="left:490.10px;top:261.70px;width:4.90px;height:5.00px;background:#5c5c5c;border-radius:1.6px"></div>
<div class="t" style="left:499.20px;transform-origin:left;top:261.36px;font-size:8.2px;font-weight:400;color:#4a4a4a;transform:scaleX(0.88);-webkit-text-stroke:0.1px #4a4a4a;">Paid</div>
<div class="r" style="left:556.30px;top:259.30px;width:53.20px;height:11.00px;background:#ffeb78;border-radius:6px"></div>
<svg class="r" style="left:560.20px;top:262.20px" width="6" height="6" viewBox="0 0 6 6"><circle cx="2.6" cy="2.6" r="2.05" fill="none" stroke="#4f4700" stroke-width="1.0"/></svg>
<div class="t" style="left:569.50px;transform-origin:left;top:261.44px;font-size:8.1px;font-weight:400;color:#4f4700;transform:scaleX(0.97);-webkit-text-stroke:0.2px #4f4700;">Unfulfilled</div>
<div class="t" style="left:632.20px;transform-origin:left;top:260.97px;font-size:8.3px;font-weight:400;color:#333333;transform:scaleX(0.91);-webkit-text-stroke:0.08px #333333;">1 item</div>
<div class="t" style="left:729.90px;transform-origin:left;top:260.97px;font-size:8.3px;font-weight:400;color:#333333;transform:scaleX(0.92);-webkit-text-stroke:0.08px #333333;">Standard</div>
<div class="r" style="left:802.50px;top:258.50px;width:62.20px;height:11.80px;background:#e8e8e8;border-radius:6px"></div>
<svg class="r" style="left:805.80px;top:261.90px" width="7" height="6" viewBox="0 0 7 6"><path d="M3.3 0.6 L6.3 5.5 L0.3 5.5 Z" fill="none" stroke="#5a5a5a" stroke-width="0.8" stroke-linejoin="round"/><path d="M3.3 2.2 L3.3 3.8" stroke="#5a5a5a" stroke-width="0.7"/></svg>
<div class="t" style="left:814.10px;transform-origin:left;top:261.14px;font-size:8.1px;font-weight:400;color:#444444;transform:scaleX(0.94);-webkit-text-stroke:0.15px #444444;">COD-Pending</div>
<div class="r" style="left:867.70px;top:258.50px;width:64.00px;height:11.80px;background:#e8e8e8;border-radius:6px"></div>
<svg class="r" style="left:872.10px;top:261.30px" width="7" height="7" viewBox="0 0 7 7"><rect x="0" y="0" width="7" height="7" rx="1" fill="#50c878"/><path d="M1.6 3.6 L3 5 L5.6 2" fill="none" stroke="#fff" stroke-width="0.9"/></svg>
<div class="t" style="left:883.20px;transform-origin:left;top:261.14px;font-size:8.1px;font-weight:400;color:#444444;transform:scaleX(0.94);-webkit-text-stroke:0.15px #444444;">COD-Verified</div>
<div class="r" style="left:154.00px;top:273.50px;width:861.00px;height:1.00px;background:#eeeeee"></div>
<div class="r" style="left:161.50px;top:279.30px;width:10.00px;height:10.00px;background:#fff;border:1px solid #c2c2c2;border-radius:2.5px;box-sizing:border-box"></div>
<div class="t" style="left:179.00px;transform-origin:left;top:280.77px;font-size:8.3px;font-weight:400;color:#333333;transform:scaleX(0.88);-webkit-text-stroke:0.26px #333333;">#1004</div>
<div class="t" style="left:223.10px;transform-origin:left;top:280.77px;font-size:8.3px;font-weight:400;color:#333333;transform:scaleX(0.91);-webkit-text-stroke:0.08px #333333;">Nov 12 at 4:29 am</div>
<div class="t" style="left:299.20px;transform-origin:left;top:280.77px;font-size:8.3px;font-weight:400;color:#333333;transform:scaleX(0.893);-webkit-text-stroke:0.08px #333333;">Keerthana Keerthana</div>
<div class="t" style="left:390.70px;transform-origin:left;top:280.77px;font-size:8.3px;font-weight:400;color:#333333;transform:scaleX(0.927);-webkit-text-stroke:0.08px #333333;">Online Store</div>
<div class="t" style="right:555.20px;transform-origin:right;top:280.77px;font-size:8.3px;font-weight:400;color:#333333;transform:scaleX(0.947);-webkit-text-stroke:0.08px #333333;">₹354.00</div>
<div class="r" style="left:485.30px;top:279.10px;width:32.90px;height:11.00px;background:#ebebeb;border-radius:6px"></div>
<div class="r" style="left:490.10px;top:281.50px;width:4.90px;height:5.00px;background:#5c5c5c;border-radius:1.6px"></div>
<div class="t" style="left:499.20px;transform-origin:left;top:281.16px;font-size:8.2px;font-weight:400;color:#4a4a4a;transform:scaleX(0.88);-webkit-text-stroke:0.1px #4a4a4a;">Paid</div>
<div class="r" style="left:556.30px;top:279.10px;width:53.20px;height:11.00px;background:#ffeb78;border-radius:6px"></div>
<svg class="r" style="left:560.20px;top:282.00px" width="6" height="6" viewBox="0 0 6 6"><circle cx="2.6" cy="2.6" r="2.05" fill="none" stroke="#4f4700" stroke-width="1.0"/></svg>
<div class="t" style="left:569.50px;transform-origin:left;top:281.24px;font-size:8.1px;font-weight:400;color:#4f4700;transform:scaleX(0.97);-webkit-text-stroke:0.2px #4f4700;">Unfulfilled</div>
<div class="t" style="left:632.20px;transform-origin:left;top:280.77px;font-size:8.3px;font-weight:400;color:#333333;transform:scaleX(0.91);-webkit-text-stroke:0.08px #333333;">1 item</div>
<div class="t" style="left:729.90px;transform-origin:left;top:280.77px;font-size:8.3px;font-weight:400;color:#333333;transform:scaleX(0.92);-webkit-text-stroke:0.08px #333333;">Standard</div>
<div class="r" style="left:802.50px;top:278.30px;width:62.20px;height:11.80px;background:#e8e8e8;border-radius:6px"></div>
<svg class="r" style="left:805.80px;top:281.70px" width="7" height="6" viewBox="0 0 7 6"><path d="M3.3 0.6 L6.3 5.5 L0.3 5.5 Z" fill="none" stroke="#5a5a5a" stroke-width="0.8" stroke-linejoin="round"/><path d="M3.3 2.2 L3.3 3.8" stroke="#5a5a5a" stroke-width="0.7"/></svg>
<div class="t" style="left:814.10px;transform-origin:left;top:280.94px;font-size:8.1px;font-weight:400;color:#444444;transform:scaleX(0.94);-webkit-text-stroke:0.15px #444444;">COD-Pending</div>
<div class="r" style="left:154.00px;top:293.30px;width:861.00px;height:1.00px;background:#eeeeee"></div>
<div class="r" style="left:161.50px;top:299.10px;width:10.00px;height:10.00px;background:#fff;border:1px solid #c2c2c2;border-radius:2.5px;box-sizing:border-box"></div>
<div class="t" style="left:179.00px;transform-origin:left;top:300.57px;font-size:8.3px;font-weight:400;color:#333333;transform:scaleX(0.88);-webkit-text-stroke:0.26px #333333;">#1003</div>
<div class="t" style="left:223.10px;transform-origin:left;top:300.57px;font-size:8.3px;font-weight:400;color:#333333;transform:scaleX(0.91);-webkit-text-stroke:0.08px #333333;">Nov 12 at 4:15 am</div>
<div class="t" style="left:299.20px;transform-origin:left;top:300.57px;font-size:8.3px;font-weight:400;color:#333333;transform:scaleX(0.893);-webkit-text-stroke:0.08px #333333;">Keerthana Keerthana</div>
<div class="t" style="left:390.70px;transform-origin:left;top:300.57px;font-size:8.3px;font-weight:400;color:#333333;transform:scaleX(0.927);-webkit-text-stroke:0.08px #333333;">Online Store</div>
<div class="t" style="right:555.20px;transform-origin:right;top:300.57px;font-size:8.3px;font-weight:400;color:#333333;transform:scaleX(0.947);-webkit-text-stroke:0.08px #333333;">₹470.82</div>
<div class="r" style="left:485.30px;top:298.90px;width:32.90px;height:11.00px;background:#ebebeb;border-radius:6px"></div>
<div class="r" style="left:490.10px;top:301.30px;width:4.90px;height:5.00px;background:#5c5c5c;border-radius:1.6px"></div>
<div class="t" style="left:499.20px;transform-origin:left;top:300.96px;font-size:8.2px;font-weight:400;color:#4a4a4a;transform:scaleX(0.88);-webkit-text-stroke:0.1px #4a4a4a;">Paid</div>
<div class="r" style="left:556.30px;top:298.90px;width:53.20px;height:11.00px;background:#ffeb78;border-radius:6px"></div>
<svg class="r" style="left:560.20px;top:301.80px" width="6" height="6" viewBox="0 0 6 6"><circle cx="2.6" cy="2.6" r="2.05" fill="none" stroke="#4f4700" stroke-width="1.0"/></svg>
<div class="t" style="left:569.50px;transform-origin:left;top:301.04px;font-size:8.1px;font-weight:400;color:#4f4700;transform:scaleX(0.97);-webkit-text-stroke:0.2px #4f4700;">Unfulfilled</div>
<div class="t" style="left:632.20px;transform-origin:left;top:300.57px;font-size:8.3px;font-weight:400;color:#333333;transform:scaleX(0.91);-webkit-text-stroke:0.08px #333333;">1 item</div>
<div class="t" style="left:729.90px;transform-origin:left;top:300.57px;font-size:8.3px;font-weight:400;color:#333333;transform:scaleX(0.92);-webkit-text-stroke:0.08px #333333;">Standard</div>
<div class="r" style="left:802.50px;top:298.10px;width:64.00px;height:11.80px;background:#e8e8e8;border-radius:6px"></div>
<svg class="r" style="left:806.90px;top:300.90px" width="7" height="7" viewBox="0 0 7 7"><rect x="0" y="0" width="7" height="7" rx="1" fill="#50c878"/><path d="M1.6 3.6 L3 5 L5.6 2" fill="none" stroke="#fff" stroke-width="0.9"/></svg>
<div class="t" style="left:818.00px;transform-origin:left;top:300.74px;font-size:8.1px;font-weight:400;color:#444444;transform:scaleX(0.94);-webkit-text-stroke:0.15px #444444;">COD-Verified</div>
<div class="r" style="left:154.00px;top:313.10px;width:861.00px;height:1.00px;background:#eeeeee"></div>
<div class="r" style="left:161.50px;top:318.90px;width:10.00px;height:10.00px;background:#fff;border:1px solid #c2c2c2;border-radius:2.5px;box-sizing:border-box"></div>
<div class="t" style="left:179.00px;transform-origin:left;top:320.37px;font-size:8.3px;font-weight:400;color:#333333;transform:scaleX(0.88);-webkit-text-stroke:0.26px #333333;">#1002</div>
<div class="t" style="left:223.10px;transform-origin:left;top:320.37px;font-size:8.3px;font-weight:400;color:#333333;transform:scaleX(0.91);-webkit-text-stroke:0.08px #333333;">Nov 12 at 2:30 am</div>
<div class="t" style="left:299.20px;transform-origin:left;top:320.37px;font-size:8.3px;font-weight:400;color:#333333;transform:scaleX(0.893);-webkit-text-stroke:0.08px #333333;">Keerthana Keerthana</div>
<div class="t" style="left:390.70px;transform-origin:left;top:320.37px;font-size:8.3px;font-weight:400;color:#333333;transform:scaleX(0.927);-webkit-text-stroke:0.08px #333333;">Online Store</div>
<div class="t" style="right:555.20px;transform-origin:right;top:320.37px;font-size:8.3px;font-weight:400;color:#333333;transform:scaleX(0.947);-webkit-text-stroke:0.08px #333333;">₹470.82</div>
<div class="r" style="left:485.30px;top:318.70px;width:32.90px;height:11.00px;background:#ebebeb;border-radius:6px"></div>
<div class="r" style="left:490.10px;top:321.10px;width:4.90px;height:5.00px;background:#5c5c5c;border-radius:1.6px"></div>
<div class="t" style="left:499.20px;transform-origin:left;top:320.76px;font-size:8.2px;font-weight:400;color:#4a4a4a;transform:scaleX(0.88);-webkit-text-stroke:0.1px #4a4a4a;">Paid</div>
<div class="r" style="left:556.30px;top:318.70px;width:53.20px;height:11.00px;background:#ffeb78;border-radius:6px"></div>
<svg class="r" style="left:560.20px;top:321.60px" width="6" height="6" viewBox="0 0 6 6"><circle cx="2.6" cy="2.6" r="2.05" fill="none" stroke="#4f4700" stroke-width="1.0"/></svg>
<div class="t" style="left:569.50px;transform-origin:left;top:320.84px;font-size:8.1px;font-weight:400;color:#4f4700;transform:scaleX(0.97);-webkit-text-stroke:0.2px #4f4700;">Unfulfilled</div>
<div class="t" style="left:632.20px;transform-origin:left;top:320.37px;font-size:8.3px;font-weight:400;color:#333333;transform:scaleX(0.91);-webkit-text-stroke:0.08px #333333;">1 item</div>
<div class="t" style="left:729.90px;transform-origin:left;top:320.37px;font-size:8.3px;font-weight:400;color:#333333;transform:scaleX(0.92);-webkit-text-stroke:0.08px #333333;">Standard</div>
<div class="r" style="left:802.50px;top:317.90px;width:64.00px;height:11.80px;background:#e8e8e8;border-radius:6px"></div>
<svg class="r" style="left:806.90px;top:320.70px" width="7" height="7" viewBox="0 0 7 7"><rect x="0" y="0" width="7" height="7" rx="1" fill="#50c878"/><path d="M1.6 3.6 L3 5 L5.6 2" fill="none" stroke="#fff" stroke-width="0.9"/></svg>
<div class="t" style="left:818.00px;transform-origin:left;top:320.54px;font-size:8.1px;font-weight:400;color:#444444;transform:scaleX(0.94);-webkit-text-stroke:0.15px #444444;">COD-Verified</div>
<div class="r" style="left:154.00px;top:332.90px;width:861.00px;height:1.00px;background:#eeeeee"></div>
<div class="r" style="left:161.50px;top:338.70px;width:10.00px;height:10.00px;background:#fff;border:1px solid #c2c2c2;border-radius:2.5px;box-sizing:border-box"></div>
<div class="t" style="left:179.00px;transform-origin:left;top:340.17px;font-size:8.3px;font-weight:400;color:#333333;transform:scaleX(0.88);-webkit-text-stroke:0.26px #333333;">#1001</div>
<div class="t" style="left:223.10px;transform-origin:left;top:340.17px;font-size:8.3px;font-weight:400;color:#333333;transform:scaleX(0.91);-webkit-text-stroke:0.08px #333333;">Nov 11 at 1:50 am</div>
<div class="t" style="left:299.20px;transform-origin:left;top:340.17px;font-size:8.3px;font-weight:400;color:#333333;transform:scaleX(0.893);-webkit-text-stroke:0.08px #333333;">Keerthana Keerthana</div>
<div class="t" style="left:390.70px;transform-origin:left;top:340.17px;font-size:8.3px;font-weight:400;color:#333333;transform:scaleX(0.927);-webkit-text-stroke:0.08px #333333;">Online Store</div>
<div class="t" style="right:555.20px;transform-origin:right;top:340.17px;font-size:8.3px;font-weight:400;color:#333333;transform:scaleX(0.947);-webkit-text-stroke:0.08px #333333;">₹690.00</div>
<div class="r" style="left:485.30px;top:338.50px;width:32.90px;height:11.00px;background:#ebebeb;border-radius:6px"></div>
<div class="r" style="left:490.10px;top:340.90px;width:4.90px;height:5.00px;background:#5c5c5c;border-radius:1.6px"></div>
<div class="t" style="left:499.20px;transform-origin:left;top:340.56px;font-size:8.2px;font-weight:400;color:#4a4a4a;transform:scaleX(0.88);-webkit-text-stroke:0.1px #4a4a4a;">Paid</div>
<div class="r" style="left:556.30px;top:338.50px;width:53.20px;height:11.00px;background:#ffeb78;border-radius:6px"></div>
<svg class="r" style="left:560.20px;top:341.40px" width="6" height="6" viewBox="0 0 6 6"><circle cx="2.6" cy="2.6" r="2.05" fill="none" stroke="#4f4700" stroke-width="1.0"/></svg>
<div class="t" style="left:569.50px;transform-origin:left;top:340.64px;font-size:8.1px;font-weight:400;color:#4f4700;transform:scaleX(0.97);-webkit-text-stroke:0.2px #4f4700;">Unfulfilled</div>
<div class="t" style="left:632.20px;transform-origin:left;top:340.17px;font-size:8.3px;font-weight:400;color:#333333;transform:scaleX(0.91);-webkit-text-stroke:0.08px #333333;">1 item</div>
<div class="t" style="left:729.90px;transform-origin:left;top:340.17px;font-size:8.3px;font-weight:400;color:#333333;transform:scaleX(0.92);-webkit-text-stroke:0.08px #333333;">Cash- Rupees 100</div>
<div class="t" style="left:541.80px;transform-origin:left;top:369.61px;font-size:7.9px;font-weight:400;color:#303030;transform:scaleX(0.985);-webkit-text-stroke:0.3px #303030;">Learn more about orders</div>
<div class="r" style="left:151.00px;top:115.80px;width:142.80px;height:19.20px;border:3px solid #e01b1b;box-sizing:border-box"></div>
<div class="r" style="left:476.00px;top:116.30px;width:80.70px;height:22.60px;border:3.5px solid #e01b1b;box-sizing:border-box"></div>
<svg class="r" style="left:50.00px;top:60.00px" width="60" height="55" viewBox="0 0 60 55"><path d="M7.1 10 L24.5 14.1 L14.1 26.1 Z" fill="#e01b1b"/><path d="M18 19.5 L50 45.1" stroke="#e01b1b" stroke-width="3.3"/></svg>
</body></html>
